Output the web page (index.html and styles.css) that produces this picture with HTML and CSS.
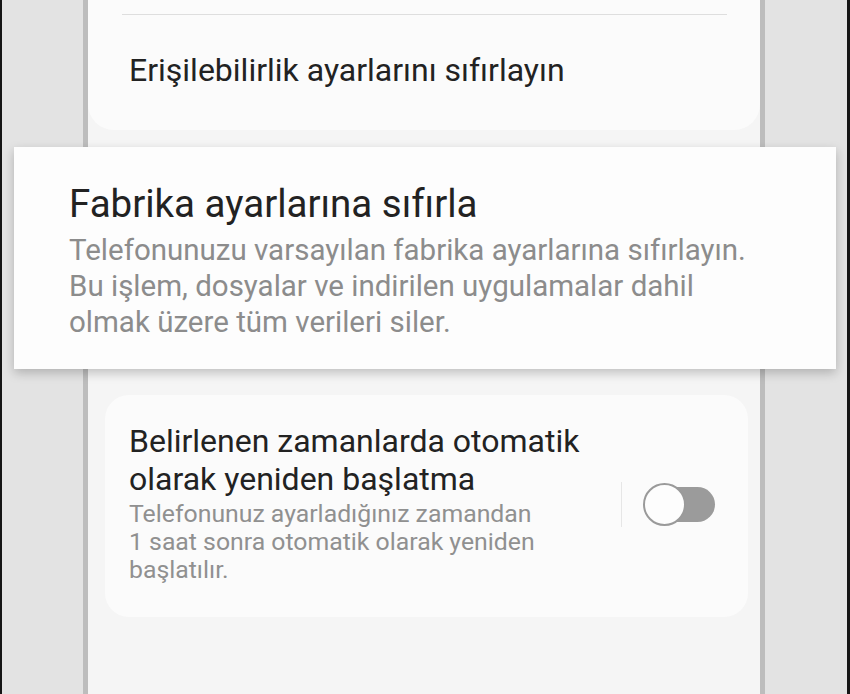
FILE: index.html
```html
<!DOCTYPE html>
<html lang="tr">
<head>
<meta charset="utf-8">
<title>Sıfırla</title>
<link rel="stylesheet" href="styles.css">
</head>
<body>
<div class="stage">
  <div class="phone">
    <div class="card card-top">
      <div class="divider"></div>
      <div class="row-title">Erişilebilirlik ayarlarını sıfırlayın</div>
    </div>
    <div class="card card-restart">
      <div class="restart-text">
        <div class="restart-title">Belirlenen zamanlarda otomatik<br>olarak yeniden başlatma</div>
        <div class="restart-sub">Telefonunuz ayarladığınız zamandan<br>1 saat sonra otomatik olarak yeniden<br>başlatılır.</div>
      </div>
      <div class="switch-area">
        <div class="sep"></div>
        <div class="switch">
          <div class="track"></div>
          <div class="knob"></div>
        </div>
      </div>
    </div>
  </div>
  <div class="popup">
    <div class="popup-title">Fabrika ayarlarına sıfırla</div>
    <div class="popup-desc">Telefonunuzu varsayılan fabrika ayarlarına sıfırlayın.<br>Bu işlem, dosyalar ve indirilen uygulamalar dahil<br>olmak üzere tüm verileri siler.</div>
  </div>
</div>
</body>
</html>
```

FILE: styles.css
```css
html, body {
  margin: 0;
  padding: 0;
}
body {
  width: 850px;
  height: 694px;
  overflow: hidden;
  font-family: Roboto, "Noto Sans", "Liberation Sans", sans-serif;
}
.stage {
  position: relative;
  box-sizing: border-box;
  width: 850px;
  height: 694px;
  background: #e3e3e3;
  border-left: 2px solid #151515;
  border-right: 3px solid #151515;
  padding-left: 81px;
  display: flex;
}
.phone {
  width: 672px;
  height: 694px;
  border-left: 5px solid #bdbdbd;
  border-right: 5px solid #bdbdbd;
  background: #f5f5f5;
  display: flex;
  flex-direction: column;
}
.card {
  background: #fbfbfb;
}
.card-top {
  height: 130px;
  border-radius: 0 0 26px 26px;
  padding-top: 14px;
  box-sizing: border-box;
}
.divider {
  height: 1px;
  background: #dedede;
  margin: 0 33px 0 34px;
}
.row-title {
  margin: 36px 0 0 41px;
  font-size: 32px;
  line-height: 38px;
  color: #222;
}
.card-restart {
  margin: 265px 12px 0 17px;
  height: 222px;
  box-sizing: border-box;
  border-radius: 24px;
  padding: 27px 0 0 24px;
  display: flex;
  align-items: center;
  align-self: stretch;
}
.restart-text {
  width: 492px;
  align-self: flex-start;
}
.restart-title {
  font-size: 32px;
  line-height: 38px;
  color: #222;
}
.restart-sub {
  margin-top: 2px;
  font-size: 24.8px;
  line-height: 28px;
  color: #909090;
}
.switch-area {
  display: flex;
  align-items: center;
  margin-top: -31px;
}
.sep {
  width: 1px;
  height: 45px;
  background: #e6e6e6;
  margin-right: 21px;
}
.switch {
  position: relative;
  width: 72px;
  height: 43px;
}
.track {
  position: absolute;
  left: 16px;
  top: 4px;
  width: 56px;
  height: 35px;
  border-radius: 18px;
  background: #9b9b9b;
}
.knob {
  position: absolute;
  left: 0;
  top: 0;
  width: 39px;
  height: 39px;
  border-radius: 50%;
  background: #fdfdfd;
  border: 2px solid #9a9a9a;
}
.popup {
  position: absolute;
  left: 12px;
  top: 147px;
  width: 822px;
  height: 222px;
  box-sizing: border-box;
  background: #fdfdfd;
  box-shadow: 0 4px 10px rgba(0, 0, 0, 0.22);
  padding: 37px 0 0 55px;
}
.popup-title {
  font-size: 38.5px;
  line-height: 40px;
  color: #222;
}
.popup-desc {
  margin-top: 8px;
  font-size: 29.5px;
  line-height: 36px;
  color: #8c8c8c;
}
```
